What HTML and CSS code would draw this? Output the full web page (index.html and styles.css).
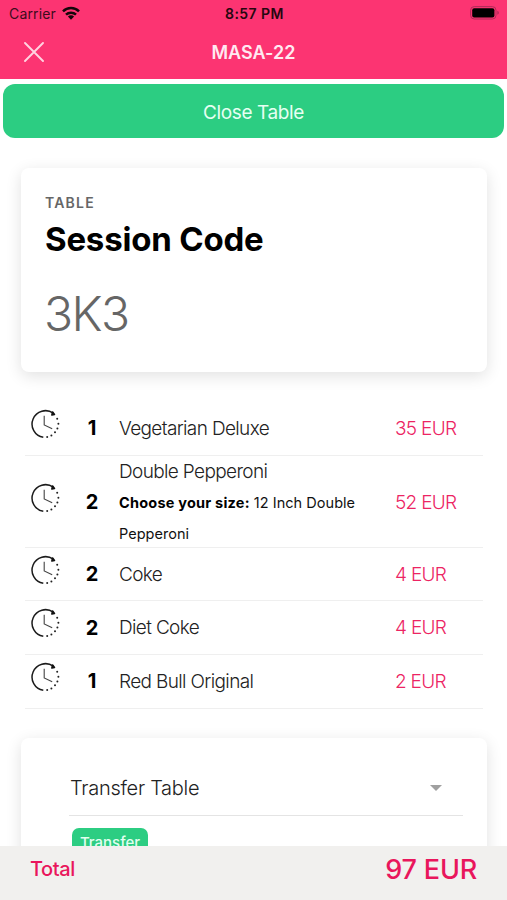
FILE: index.html
```html
<!DOCTYPE html>
<html lang="en">
<head>
<meta charset="utf-8">
<meta name="viewport" content="width=device-width, initial-scale=1">
<title>MASA-22</title>
<link rel="stylesheet" href="styles.css">
</head>
<body>
<svg class="defs" width="0" height="0" aria-hidden="true">
  <symbol id="clock" viewBox="0 0 30 30">
    <path d="M13.3 28.3A13.4 13.4 0 1 1 23.3 4.2" fill="none" stroke="#1c1c1c" stroke-width="1.5"/>
    <path d="M22.6 3l1.9 2.4-2.6.6z" fill="#111" stroke="#111" stroke-width="1.6" stroke-linejoin="round"/>
    <path d="M14.2 6.8v9.1l8 3.9" fill="none" stroke="#444" stroke-width="1.1"/>
    <g fill="#222">
      <circle cx="27.2" cy="9.8" r="1"/><circle cx="28.4" cy="14.8" r="1"/><circle cx="27.4" cy="19.6" r="1"/>
      <circle cx="25" cy="23.3" r="1"/><circle cx="21.4" cy="26.4" r="1"/><circle cx="17.2" cy="28.1" r="1"/>
    </g>
  </symbol>
</svg>
<div class="screen">
  <header class="top">
    <div class="status">
      <div class="carrier"><span>Carrier</span>
        <svg class="wifi" viewBox="0 0 18 14"><g fill="none" stroke="#14060a" stroke-width="2.5"><path d="M1 5.3a11.4 11.4 0 0 1 16 0"/><path d="M4 8.7a7.1 7.1 0 0 1 10 0"/></g><path d="M5.9 10.6a4.4 4.4 0 0 1 6.2 0L9 13.7z" fill="#14060a"/></svg>
      </div>
      <div class="time">8:57 PM</div>
      <svg class="battery" viewBox="0 0 30 14"><rect x=".6" y=".6" width="25.4" height="12.4" rx="3.6" fill="none" stroke="#b02a58" stroke-width="1"/><rect x="2.2" y="2.2" width="22.2" height="9.2" rx="2" fill="#000"/><path d="M27.3 4.8v4q1.6-.6 1.6-2t-1.6-2z" fill="#b02a58"/></svg>
    </div>
    <div class="nav">
      <svg class="close" viewBox="0 0 20 20"><path d="M1 1l18 18M19 1L1 19" stroke="#ffd3e0" stroke-width="1.9" stroke-linecap="round"/></svg>
      <h1 class="title">MASA-22</h1>
      <span></span>
    </div>
  </header>
  <main class="content">
    <button class="close-table">Close Table</button>
    <section class="card session">
      <div class="eyebrow">TABLE</div>
      <h2 class="heading">Session Code</h2>
      <div class="code">3K3</div>
    </section>
    <ul class="items">
      <li class="item"><svg class="clock"><use href="#clock"/></svg><b class="qty">1</b><div class="name"><span>Vegetarian Deluxe</span></div><span class="price">35 EUR</span></li>
      <li class="item tall"><svg class="clock"><use href="#clock"/></svg><b class="qty">2</b><div class="name"><span>Double Pepperoni</span><p class="option"><b>Choose your size:</b> 12 Inch Double<br>Pepperoni</p></div><span class="price">52 EUR</span></li>
      <li class="item"><svg class="clock"><use href="#clock"/></svg><b class="qty">2</b><div class="name"><span>Coke</span></div><span class="price">4 EUR</span></li>
      <li class="item"><svg class="clock"><use href="#clock"/></svg><b class="qty">2</b><div class="name"><span>Diet Coke</span></div><span class="price">4 EUR</span></li>
      <li class="item"><svg class="clock"><use href="#clock"/></svg><b class="qty">1</b><div class="name"><span>Red Bull Original</span></div><span class="price">2 EUR</span></li>
    </ul>
    <section class="card transfer">
      <div class="select"><span>Transfer Table</span><i class="caret"></i></div>
      <button class="transfer-btn">Transfer</button>
    </section>
  </main>
  <footer class="total"><span class="label">Total</span><span class="amount">97 EUR</span></footer>
</div>
</body>
</html>
```
FILE: styles.css
```css
* { box-sizing: border-box; margin: 0; padding: 0; }
body { font-family: Inter, "Liberation Sans", sans-serif; background: #fff; color: #000; }
.defs { display: block; height: 0; }
.screen { height: 900px; display: flex; flex-direction: column; overflow: hidden; }
.top { flex: none; height: 79px; background: #fc3472; }
.status { height: 27px; display: grid; grid-template-columns: 1fr auto 1fr; align-items: center; padding: 0 7px 0 9px; }
.carrier { display: flex; align-items: center; gap: 6px; font-size: 14px; color: #3d0c1c; letter-spacing: .15px; }
.wifi { width: 18px; height: 14px; margin-top: -2px; }
.time { font-size: 14px; font-weight: 600; color: #26070f; letter-spacing: .45px; }
.battery { width: 30px; height: 14px; justify-self: end; margin-top: -1px; }
.nav { height: 50px; display: grid; grid-template-columns: 1fr auto 1fr; align-items: center; padding: 0 24px; }
.close { width: 20px; height: 20px; }
.title { font-size: 18px; font-weight: 600; color: #ffeaf1; letter-spacing: .05px; }
.content { flex: 1; min-height: 0; overflow: hidden; padding-top: 5px; }
.close-table { display: block; width: 501px; height: 54px; margin: 0 3px; padding-top: 2px; border: 0; border-radius: 12px; background: #2ccd82; color: #e6fff2; font: 400 19px Inter, sans-serif; letter-spacing: -.4px; }
.card { margin: 0 20px 0 21px; border-radius: 8px; background: #fff; box-shadow: 0 4px 16px rgba(0,0,0,.12); }
.session { height: 204px; margin-top: 30px; padding: 27px 24px; }
.eyebrow { font-size: 14px; line-height: 16px; font-weight: 600; color: #666; letter-spacing: 1.2px; }
.heading { margin-top: 8px; font-size: 33px; line-height: 40px; font-weight: 700; letter-spacing: -.2px; }
.code { margin: 25px 0 0 -1px; font-size: 48px; line-height: 59px; font-weight: 300; color: #666; letter-spacing: -1.6px; }
.items { list-style: none; margin: 30px 24px 0 25px; }
.item { height: 53.7px; display: grid; grid-template-columns: 50px 34px 10px 1fr 88px; align-items: center; border-bottom: 1.5px solid #efefef; }
.item.tall { height: 92px; padding-bottom: 2px; }
.clock { width: 30px; height: 30px; margin: -9px 0 0 5px; }
.qty { text-align: center; font-size: 20px; font-weight: 700; }
.name { grid-column: 4; padding-top: 1px; font-size: 19px; line-height: 30px; font-weight: 300; color: #222; letter-spacing: -.64px; }
.option { font-size: 14.5px; line-height: 31px; font-weight: 400; color: #111; letter-spacing: .03px; white-space: nowrap; }
.option b { font-weight: 700; color: #000; letter-spacing: .22px; }
.price { font-size: 19px; font-weight: 300; color: #ec2463; letter-spacing: -.7px; }
.transfer { height: 204px; margin-top: 29px; padding: 24px 24px 0 48px; }
.select { height: 54px; display: flex; justify-content: space-between; align-items: center; padding: 0 21px 0 1px; border-bottom: 1px solid #e4e4e4; font-size: 20px; font-weight: 300; color: #222; letter-spacing: -.28px; }
.caret { border: 6px solid transparent; border-top-color: #a0a0a0; border-bottom: 0; }
.transfer-btn { display: block; margin: 12px 0 0 3px; width: 76px; height: 30px; border: 0; border-radius: 7px; background: #2ccd82; color: #e2fff0; font: 500 15px Inter, sans-serif; }
.total { flex: none; height: 54px; background: #f1f0ee; display: flex; justify-content: space-between; align-items: center; padding: 0 30px 8px; color: #e9165c; }
.label { font-size: 20px; font-weight: 500; letter-spacing: -.4px; }
.amount { font-size: 27px; font-weight: 500; letter-spacing: -.2px; }
```
